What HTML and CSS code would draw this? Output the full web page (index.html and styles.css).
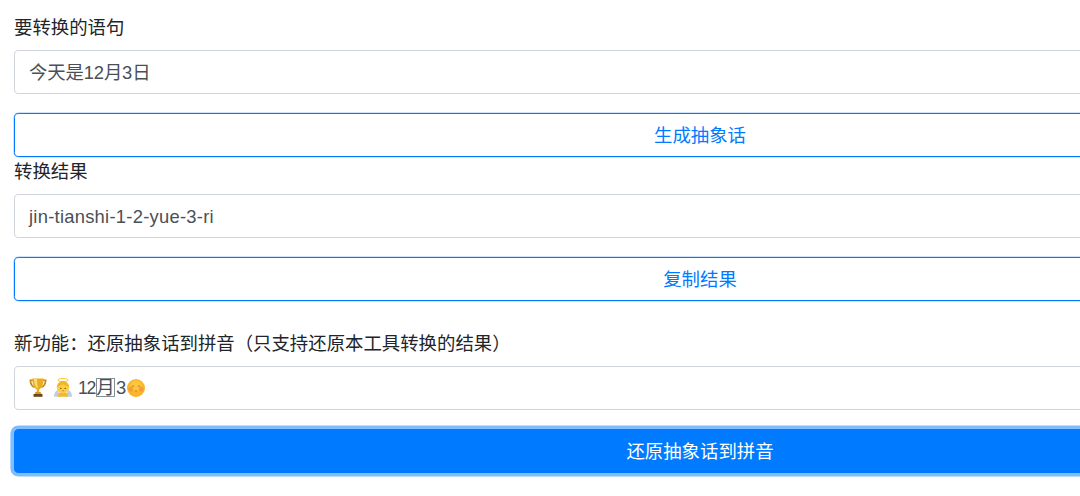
FILE: index.html
```html
<!DOCTYPE html>
<html lang="zh-CN">
<head>
<meta charset="utf-8">
<title>抽象话</title>
<link rel="stylesheet" href="styles.css">
</head>
<body>
<main class="page">
  <section class="group">
    <label class="label label-first">要转换的语句</label>
    <div class="field field-tight">今天是12月3日</div>
  </section>
  <button class="btn btn-outline">生成抽象话</button>
  <section class="group">
    <label class="label label-next">转换结果</label>
    <div class="field field-wide">jin-tianshi-1-2-yue-3-ri</div>
  </section>
  <button class="btn btn-outline">复制结果</button>
  <section class="group group-new">
    <label class="label label-next">新功能：还原抽象话到拼音（只支持还原本工具转换的结果）</label>
    <div class="field field-emoji">
      <svg class="emoji emoji-trophy" viewBox="0 0 18 19" aria-hidden="true">
        <path d="M.5 1.500 H5 V3 H2.300 C2.600 6 4 8 6 8.800 L5.300 10 C2.300 9 .5 6 .5 1.500Z M17.500 1.500 H13 V3 H15.700 C15.400 6 14 8 12 8.800 L12.700 10 C15.700 9 17.500 6 17.500 1.500Z" fill="#c08a1e"/>
        <path d="M3.300 .5 H14.700 C14.700 6.500 13 10.300 10.200 11.400 V14 H7.800 V11.400 C5 10.300 3.300 6.500 3.300 .5Z" fill="#e8ad22"/>
        <path d="M5 1 H8 C8 5.500 8.500 8 9 10.500 C6.500 9.400 5 5.500 5 1Z" fill="#fbdc6a"/>
        <path d="M6.500 14 H11.500 L12.300 16 H5.700Z" fill="#d49a1e"/>
        <path d="M4.500 16 H13.500 V18.800 H4.500Z" fill="#6e4712"/>
      </svg>
      <svg class="emoji emoji-angel" viewBox="0 0 18 19" aria-hidden="true">
        <ellipse cx="9" cy="2" rx="4.800" ry="1.500" fill="none" stroke="#f9cf3d" stroke-width="1.100"/>
        <path d="M0 18.800 C0 15 1.500 12.500 4 12 L6.500 18.800Z M18 18.800 C18 15 16.500 12.500 14 12 L11.500 18.800Z" fill="#c3cde0"/>
        <path d="M4 18.800 C4 15 6 14 9 14 C12 14 14 15 14 18.800Z" fill="#f3b62e"/>
        <circle cx="9" cy="9.300" r="6.200" fill="#fbcf45"/>
        <path d="M2.800 9 C3.300 5.300 6.500 3.100 9 3.100 C11.500 3.100 14.700 5.300 15.200 9 C13.300 8 10.500 7.300 9 6.200 C7.500 7.300 4.700 8 2.800 9Z" fill="#f4b52a"/>
        <circle cx="6.800" cy="10.400" r=".7" fill="#7a4a14"/>
        <circle cx="11.200" cy="10.400" r=".7" fill="#7a4a14"/>
        <path d="M8 12.800 H10" stroke="#c4711f" stroke-width=".7"/>
      </svg>
      <span class="digits">12</span><span class="boxed">月</span><span class="digit">3</span>
      <svg class="emoji emoji-face" viewBox="0 0 20 20" aria-hidden="true">
        <circle cx="10" cy="10" r="10" fill="#fbb42c"/>
        <circle cx="10" cy="8" r="6.500" fill="#fcc63f"/>
        <circle cx="4.300" cy="11.500" r="2.600" fill="#f79a3e"/>
        <circle cx="15.700" cy="11.500" r="2.600" fill="#f79a3e"/>
        <path d="M5 8.500 C6 7.600 7 7.600 8 8.500 M12 8.500 C13 7.600 14 7.600 15 8.500" fill="none" stroke="#b8651d" stroke-width=".9"/>
        <path d="M8.300 13 C9.200 13.700 10.800 13.700 11.700 13" fill="none" stroke="#b8651d" stroke-width=".9"/>
      </svg>
    </div>
  </section>
  <button class="btn btn-primary">还原抽象话到拼音</button>
</main>
</body>
</html>
```

FILE: styles.css
```css
html, body {
  margin: 0;
  padding: 0;
  height: 100%;
  overflow: hidden;
  background: #fff;
}

body {
  font-family: "Liberation Sans", "Noto Sans CJK SC", sans-serif;
  font-size: 18.4px;
  line-height: 27.6px;
  color: #212529;
}

.page {
  box-sizing: border-box;
  width: 1372px;
  margin-left: 14px;
  display: flex;
  flex-direction: column;
}

.label {
  display: block;
}

.label-first {
  padding-top: 14px;
  margin-bottom: 8.4px;
}

.label-next {
  padding-top: 1px;
  margin-bottom: 8.4px;
}

.group-new {
  margin-top: 28px;
}

.field {
  box-sizing: border-box;
  height: 44px;
  padding: 8px 14px 6px;
  border: 1px solid #ced4da;
  border-radius: 4.6px;
  color: #495057;
  background: #fff;
  line-height: 28px;
  white-space: nowrap;
}

.field-tight {
  letter-spacing: -.15px;
}

.field-wide {
  letter-spacing: .25px;
}

.field-emoji {
  display: flex;
  align-items: center;
  padding-top: 7px;
  padding-bottom: 7px;
}

.emoji {
  flex: none;
}

.emoji-trophy {
  width: 18px;
  height: 19px;
  margin-right: 7px;
}

.emoji-angel {
  width: 18px;
  height: 19px;
  margin-right: 6px;
}

.digits {
  flex: none;
  width: 18px;
  font-size: 17.6px;
  letter-spacing: -1.2px;
}

.digit {
  flex: none;
  width: 12px;
  text-align: center;
}

.emoji-face {
  width: 18px;
  height: 18px;
}

.boxed {
  box-sizing: border-box;
  flex: none;
  width: 19px;
  height: 19px;
  border: 1px solid #868e96;
  font-size: 18.4px;
  line-height: 17px;
  overflow: hidden;
  display: flex;
  align-items: center;
  justify-content: center;
}

.btn {
  box-sizing: border-box;
  display: block;
  width: 100%;
  height: 44px;
  margin-top: 19px;
  padding: 0;
  border: 1px solid #007bff;
  border-radius: 4.6px;
  font: inherit;
  line-height: 43px;
  text-align: center;
}

.btn-outline {
  color: #007bff;
  background: #fff;
  box-shadow: 0 0 0 .5px rgba(0, 123, 255, .4);
}

.btn-primary {
  color: #fff;
  background: #007bff;
  box-shadow: 0 0 0 3.6px rgba(0, 123, 255, .5);
}
```
